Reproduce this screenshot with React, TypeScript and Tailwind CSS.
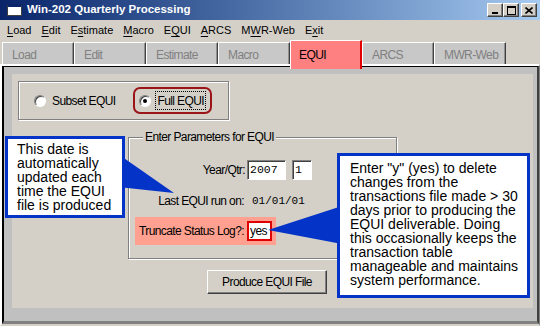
import React from "react";

const ui = { fontFamily: "'Liberation Sans', Arial, sans-serif", letterSpacing: "-0.6px" };
const menuFont = { fontFamily: "'Liberation Sans', Arial, sans-serif" };
const mono = { fontFamily: "'Liberation Mono', 'Courier New', monospace", letterSpacing: "0" };

const menus = [
  { pre: "", key: "L", post: "oad" },
  { pre: "", key: "E", post: "dit" },
  { pre: "E", key: "s", post: "timate" },
  { pre: "", key: "M", post: "acro" },
  { pre: "E", key: "Q", post: "UI" },
  { pre: "", key: "A", post: "RCS" },
  { pre: "M", key: "W", post: "R-Web" },
  { pre: "E", key: "x", post: "it" },
];

const tabs = ["Load", "Edit", "Estimate", "Macro", "EQUI", "ARCS", "MWR-Web"];

const Radio = ({ checked }: { checked?: boolean }) => (
  <span className="relative w-[12px] h-[12px] rounded-full bg-white border border-t-[#808080] border-l-[#808080] border-r-white border-b-white shadow-[inset_1px_1px_0_#404040] flex items-center justify-center shrink-0">
    {checked && <span className="w-[4px] h-[4px] rounded-full bg-black" />}
  </span>
);

const TitleButton = ({ children }: { children: React.ReactNode }) => (
  <div className="w-[16px] h-[14px] bg-[#d4d0c8] border border-t-white border-l-white border-r-[#404040] border-b-[#404040] shadow-[inset_-1px_-1px_0_#808080] flex items-center justify-center">
    {children}
  </div>
);

const App: React.FC = () => {
  return (
    <div className="relative w-[540px] h-[326px] overflow-hidden bg-[#d4d0c8] flex flex-col">
      {/* title bar */}
      <div className="h-[20px] flex items-center bg-gradient-to-r from-[#0a246a] to-[#a6caf0] pl-[7px] pr-[3px]">
        <div className="w-[15px] h-[12px] bg-white border border-[#404040] border-t-[3px] border-t-[#0a246a]" />
        <div className="ml-[5px] text-white font-bold text-[11.5px]" style={menuFont}>
          Win-202 Quarterly Processing
        </div>
        <div className="ml-auto flex items-center">
          <TitleButton>
            <svg width="8" height="7" viewBox="0 0 8 7">
              <rect x="1" y="5" width="6" height="2" fill="#000" />
            </svg>
          </TitleButton>
          <TitleButton>
            <svg width="9" height="9" viewBox="0 0 9 9">
              <rect x="0.5" y="0.5" width="8" height="8" fill="none" stroke="#000" />
              <rect x="0" y="0" width="9" height="2" fill="#000" />
            </svg>
          </TitleButton>
          <div className="ml-[2px]">
            <TitleButton>
              <svg width="8" height="7" viewBox="0 0 8 7">
                <path d="M0.5 0.5 L7.5 6.5 M7.5 0.5 L0.5 6.5" stroke="#000" strokeWidth="1.6" />
              </svg>
            </TitleButton>
          </div>
        </div>
      </div>

      {/* menu bar */}
      <div className="h-[20px] flex items-center gap-[10px] pl-[7px] text-[11px] text-black" style={menuFont}>
        {menus.map((m) => (
          <span key={m.pre + m.key + m.post}>
            {m.pre}
            <span className="underline underline-offset-[2px]">{m.key}</span>
            {m.post}
          </span>
        ))}
      </div>

      {/* tabs */}
      <div className="relative z-10 h-[24px] flex items-end pl-[2px] text-[12px] whitespace-nowrap" style={ui}>
        {tabs.map((t) =>
          t === "EQUI" ? (
            <div
              key={t}
              className="w-[72px] h-[29px] -mb-[5px] self-start bg-[#ff8080] border-t border-l border-white border-r-2 border-r-[#e00000] pl-[8px] pt-[5px] text-black"
            >
              {t}
            </div>
          ) : (
            <div
              key={t}
              className="w-[72px] h-[22px] bg-[#c8c8c8] border-t border-l border-white border-r border-r-[#404040] shadow-[inset_-1px_0_0_#909090] pl-[9px] pt-[3px] text-[#808080]"
            >
              {t}
            </div>
          )
        )}
      </div>

      {/* tab page frame */}
      <div className="flex-1 flex flex-col border-t-2 border-l-2 border-white border-b-2 border-b-[#d4d0c8] border-r-[1px] border-r-[#808080]">
        <div className="flex-1 flex flex-col bg-[#c0c0c0] border-t border-l-2 border-r-2 border-black border-r-[#404040] border-b-[3px] border-b-[#808080] pl-[8px] pr-[4px] pt-[7px] pb-[13px]">
          <div className="flex-1 bg-[#d4d0c8] flex flex-col items-start whitespace-nowrap" style={ui}>
            {/* radio group */}
            <div className="ml-[6px] mt-[7px] w-[211px] h-[39px] border border-[#808080] shadow-[inset_1px_1px_0_#fff,1px_1px_0_#fff] flex items-center text-[12px]">
              <div className="ml-[15px] flex items-center">
                <Radio />
                <span className="ml-[6px]">Subset EQUI</span>
              </div>
              <div className="ml-[18px] w-[79px] h-[27px] border-2 border-[#9a1418] rounded-[7px] flex items-center pl-[4px]">
                <Radio checked />
                <span className="ml-[4px] h-[19px] px-[1px] border border-dotted border-black flex items-center">
                  Full EQUI
                </span>
              </div>
            </div>

            {/* parameters group */}
            <fieldset className="ml-[116px] mt-[11px] w-[269px] h-[128px] border border-[#808080] shadow-[inset_1px_1px_0_#fff,1px_1px_0_#fff] pl-[6px] text-[12px]">
              <legend className="ml-[8px] px-[2px] bg-[#d4d0c8] leading-[13px]">Enter Parameters for EQUI</legend>
              <div className="mt-[16px] h-[20px] flex items-center">
                <span className="w-[112px] pr-[2px] text-right">Year/Qtr:</span>
                <div className="w-[39px] h-[20px] bg-white border border-t-[#808080] border-l-[#808080] border-r-white border-b-white shadow-[inset_1px_1px_0_#404040] pl-[2px] flex items-center text-[11.5px]" style={mono}>
                  2007
                </div>
                <div className="ml-[6px] w-[20px] h-[20px] bg-white border border-t-[#808080] border-l-[#808080] border-r-white border-b-white shadow-[inset_1px_1px_0_#404040] pl-[2px] flex items-center text-[11.5px]" style={mono}>
                  1
                </div>
              </div>
              <div className="mt-[11px] h-[20px] flex items-center">
                <span className="w-[112px] pr-[3px] text-right">Last EQUI run on:</span>
                <span className="ml-[5px] text-[11px]" style={mono}>01/01/01</span>
              </div>
              <div className="mt-[6px] w-[141px] h-[28px] bg-[#ffa090] flex items-center">
                <span className="w-[112px] pr-[3px] text-right">Truncate Status Log?:</span>
                <div className="w-[25px] h-[20px] bg-white border-2 border-[#e00000] pl-[1px] flex items-center text-[12px]" style={menuFont}>
                  yes
                </div>
              </div>
            </fieldset>

            {/* produce button */}
            <button className="ml-[195px] mt-[11px] w-[120px] h-[24px] bg-[#d4d0c8] border border-t-white border-l-white border-r-[#404040] border-b-[#404040] shadow-[inset_-1px_-1px_0_#808080] text-[12px] text-black">
              Produce EQUI File
            </button>
          </div>
        </div>
      </div>

      {/* callout pointers */}
      <svg className="absolute inset-0 pointer-events-none" width="540" height="326" viewBox="0 0 540 326">
        <polygon points="118,154 118,187 174,193" fill="#0433c8" />
        <polygon points="342,206 342,244 268,230" fill="#0433c8" />
      </svg>

      {/* left callout */}
      <div
        className="absolute left-[5px] top-[136px] w-[120px] h-[82px] bg-white border-[3px] border-[#0433c8] pl-[9px] pt-[3px] text-[14px] leading-[14px] text-black whitespace-nowrap"
        style={menuFont}
      >
        This date is
        <br />
        automatically
        <br />
        updated each
        <br />
        time the EQUI
        <br />
        file is produced
      </div>

      {/* right callout */}
      <div
        className="absolute left-[337px] top-[153px] w-[193px] h-[145px] bg-white border-[3px] border-[#0433c8] pl-[10px] pt-[5px] text-[14px] leading-[14px] text-black whitespace-nowrap"
        style={menuFont}
      >
        Enter "y" (yes) to delete
        <br />
        changes from the
        <br />
        transactions file made &gt; 30
        <br />
        days prior to producing the
        <br />
        EQUI deliverable. Doing
        <br />
        this occasionally keeps the
        <br />
        transaction table
        <br />
        manageable and maintains
        <br />
        system performance.
      </div>
    </div>
  );
};

export default App;
